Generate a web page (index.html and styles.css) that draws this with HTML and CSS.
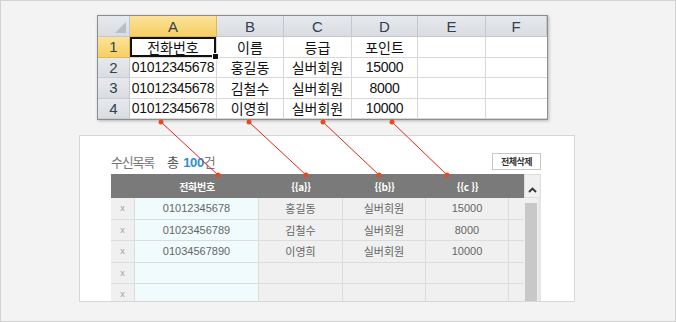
FILE: index.html
```html
<!DOCTYPE html>
<html lang="ko">
<head>
    <meta charset="UTF-8">
    <meta name="viewport" content="width=device-width, initial-scale=1.0">
    <title>수신목록 매핑</title>
    <link rel="stylesheet" href="styles.css">
</head>
<body>
    <div class="stage">
        <!-- Excel source sheet -->
        <div class="sheet">
            <div class="hd corner"></div>
            <div class="hd col sel">A</div>
            <div class="hd col">B</div>
            <div class="hd col">C</div>
            <div class="hd col">D</div>
            <div class="hd col">E</div>
            <div class="hd col">F</div>

            <div class="hd row sel">1</div>
            <div class="cell ko active">전화번호</div>
            <div class="cell ko">이름</div>
            <div class="cell ko">등급</div>
            <div class="cell ko">포인트</div>
            <div class="cell"></div>
            <div class="cell"></div>

            <div class="hd row">2</div>
            <div class="cell num">01012345678</div>
            <div class="cell ko">홍길동</div>
            <div class="cell ko">실버회원</div>
            <div class="cell num">15000</div>
            <div class="cell"></div>
            <div class="cell"></div>

            <div class="hd row">3</div>
            <div class="cell num">01012345678</div>
            <div class="cell ko">김철수</div>
            <div class="cell ko">실버회원</div>
            <div class="cell num">8000</div>
            <div class="cell"></div>
            <div class="cell"></div>

            <div class="hd row">4</div>
            <div class="cell num">01012345678</div>
            <div class="cell ko">이영희</div>
            <div class="cell ko">실버회원</div>
            <div class="cell num">10000</div>
            <div class="cell"></div>
            <div class="cell"></div>
        </div>

        <!-- Recipient list panel -->
        <div class="panel">
            <div class="toolbar">
                <div class="title">
                    수신목록<span class="total">총 <b>100</b><span class="unit">건</span></span>
                </div>
                <button class="btn">전체삭제</button>
            </div>

            <div class="list">
                <div class="cols">
                    <div class="list-head">
                        <div></div>
                        <div>전화번호</div>
                        <div>{{a}}</div>
                        <div>{{b}}</div>
                        <div>{{c }}</div>
                        <div></div>
                    </div>
                    <div class="list-row">
                        <div class="del">x</div>
                        <div class="phone">01012345678</div>
                        <div>홍길동</div>
                        <div>실버회원</div>
                        <div>15000</div>
                        <div></div>
                    </div>
                    <div class="list-row">
                        <div class="del">x</div>
                        <div class="phone">01023456789</div>
                        <div>김철수</div>
                        <div>실버회원</div>
                        <div>8000</div>
                        <div></div>
                    </div>
                    <div class="list-row">
                        <div class="del">x</div>
                        <div class="phone">01034567890</div>
                        <div>이영희</div>
                        <div>실버회원</div>
                        <div>10000</div>
                        <div></div>
                    </div>
                    <div class="list-row">
                        <div class="del">x</div>
                        <div class="phone"></div>
                        <div></div>
                        <div></div>
                        <div></div>
                        <div></div>
                    </div>
                    <div class="list-row">
                        <div class="del">x</div>
                        <div class="phone"></div>
                        <div></div>
                        <div></div>
                        <div></div>
                        <div></div>
                    </div>
                </div>
                <div class="scroll">
                    <div class="scroll-cap">
                        <svg width="9" height="6" viewBox="0 0 9 6"><polyline points="1,5 4.5,1.5 8,5" fill="none" stroke="#333" stroke-width="1.8"/></svg>
                    </div>
                    <div class="scroll-track"><div class="thumb"></div></div>
                </div>
            </div>
        </div>

        <!-- mapping arrows -->
        <svg class="links" width="676" height="322" viewBox="0 0 676 322">
            <g stroke="#e2261c" stroke-width="1">
                <line x1="161" y1="122" x2="218" y2="175"/>
                <line x1="249" y1="122" x2="306" y2="175"/>
                <line x1="323" y1="122" x2="379" y2="175"/>
                <line x1="392" y1="122" x2="447" y2="175"/>
            </g>
            <g fill="#ea4a1a">
                <circle cx="161" cy="122" r="2.5"/>
                <circle cx="249" cy="122" r="2.5"/>
                <circle cx="323" cy="122" r="2.5"/>
                <circle cx="392" cy="122" r="2.5"/>
                <circle cx="218" cy="175" r="2.5"/>
                <circle cx="306" cy="175" r="2.5"/>
                <circle cx="379" cy="175" r="2.5"/>
                <circle cx="447" cy="175" r="2.5"/>
            </g>
        </svg>
    </div>
</body>
</html>
```

FILE: styles.css
```css
body {
    margin: 0;
    font-family: "Liberation Sans", "Noto Sans CJK KR", sans-serif;
}
.stage {
    position: relative;
    width: 676px;
    height: 322px;
    box-sizing: border-box;
    border: 1px solid #d2d2d2;
    background-color: #f3f3f3;
    overflow: hidden;
    display: flex;
    flex-direction: column;
    align-items: flex-start;
}

/* excel sheet */
.sheet {
    margin: 14px 0 0 96px;
    display: grid;
    grid-template-columns: 32px 87px 67px 68px 66px 68px 61px;
    grid-template-rows: 21px repeat(4, 20.5px);
    border: 1px solid #8e8e8e;
    background-color: #fff;
    box-shadow: 1px 1px 3px rgba(0,0,0,0.25);
}
.hd {
    box-sizing: border-box;
    display: flex;
    align-items: center;
    justify-content: center;
    background: linear-gradient(#e6e9ed, #d9dde2);
    color: #33404f;
    font-size: 15px;
    border-right: 1px solid #c3c8cf;
    border-bottom: 1px solid #c3c8cf;
}
.hd.row {
    border-bottom: 1px solid #c9cdd3;
}
.hd.sel {
    background: linear-gradient(#fbe39a, #f7cf62);
    border-color: #e2b955;
}
.corner {
    position: relative;
}
.corner::after {
    content: "";
    position: absolute;
    right: 3px;
    bottom: 3px;
    border-left: 11px solid transparent;
    border-bottom: 11px solid #b8bec6;
}
.cell {
    box-sizing: border-box;
    display: flex;
    align-items: center;
    justify-content: center;
    color: #111;
    border-right: 1px solid #d8d8d8;
    border-bottom: 1px solid #d8d8d8;
    white-space: nowrap;
}
.cell:nth-child(7n) {
    border-right: none;
}
.cell.ko {
    font-family: "Noto Sans CJK KR", sans-serif;
    font-size: 14px;
}
.cell.num {
    font-size: 14px;
    letter-spacing: -0.3px;
}
.cell.active {
    position: relative;
    box-shadow: inset 0 0 0 2px #111;
}
.cell.active::after {
    content: "";
    position: absolute;
    right: -3px;
    bottom: -3px;
    width: 5px;
    height: 5px;
    background-color: #111;
    border: 1px solid #fff;
}

/* recipient panel */
.panel {
    margin: 15px 0 0 78px;
    width: 496px;
    height: 167px;
    box-sizing: border-box;
    border: 1px solid #d6d6d6;
    background-color: #fff;
    padding: 16px 33px 0 31px;
    overflow: hidden;
}
.toolbar {
    height: 18px;
    display: flex;
    align-items: center;
    justify-content: space-between;
}
.title {
    font-family: "Noto Sans CJK KR", sans-serif;
    font-size: 13px;
    letter-spacing: -1.2px;
    color: #777;
}
.total {
    margin-left: 13px;
    color: #555;
}
.total b {
    color: #2a8fd6;
    font-family: "Liberation Sans", sans-serif;
    letter-spacing: -0.4px;
    margin-left: 3px;
}
.unit {
    color: #777;
}
.btn {
    width: 49px;
    height: 17px;
    padding: 0;
    background-color: #fff;
    border: 1px solid #c8c8c8;
    font-family: "Noto Sans CJK KR", sans-serif;
    font-size: 9px;
    font-weight: bold;
    letter-spacing: -0.5px;
    color: #333;
}
.list {
    margin-top: 4px;
    display: flex;
}
.cols {
    width: 413px;
}
.list-head,
.list-row {
    display: grid;
    grid-template-columns: 24px 124px 84px 83px 83px 15px;
}
.list-head {
    height: 24px;
    background-color: #7a7a7a;
    color: #fff;
    font-family: "Noto Sans CJK KR", sans-serif;
    font-size: 10px;
    font-weight: bold;
    letter-spacing: -0.3px;
}
.list-head div {
    display: flex;
    align-items: center;
    justify-content: center;
}
.list-row {
    height: 21.5px;
    color: #666;
    font-size: 11px;
}
.list-row div {
    box-sizing: border-box;
    display: flex;
    align-items: center;
    justify-content: center;
    background-color: #f0f0f0;
    border-right: 1px solid #dcdcdc;
    border-bottom: 1px solid #dcdcdc;
    white-space: nowrap;
}
.list-row div:last-child {
    border-right: none;
}
.list-row .phone {
    background-color: #effbfd;
}
.list-row .del {
    color: #a0a0a0;
    font-size: 9px;
}
.scroll {
    width: 17px;
    display: flex;
    flex-direction: column;
}
.scroll-cap {
    height: 24px;
    box-sizing: border-box;
    border: 1px solid #dedede;
    background-color: #f0f0f0;
    display: flex;
    align-items: flex-end;
    justify-content: center;
    padding-bottom: 4px;
}
.scroll-track {
    height: 120px;
    box-sizing: border-box;
    background-color: #f0f0f0;
    border-right: 3px solid #e6e6e6;
    padding: 5px 1px 0 1px;
}
.thumb {
    height: 100%;
    background-color: #c8c8c8;
}
.links {
    position: absolute;
    left: -1px;
    top: -1px;
    pointer-events: none;
}
```
